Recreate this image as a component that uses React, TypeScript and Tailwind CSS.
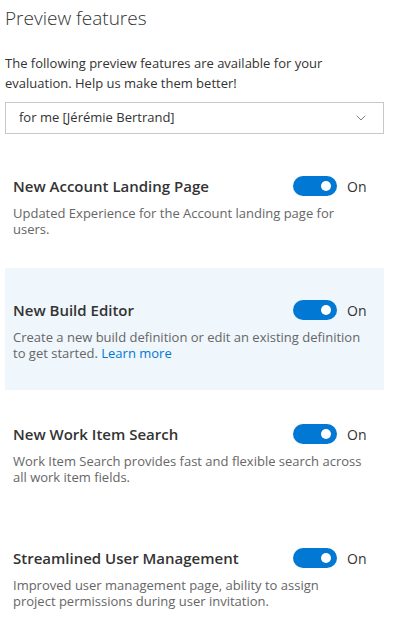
import { ChevronDown } from "lucide-react";

const features = [
  {
    title: "New Account Landing Page",
    desc: "Updated Experience for the Account landing page for users.",
    active: false,
  },
  {
    title: "New Build Editor",
    desc: "Create a new build definition or edit an existing definition to get started.",
    link: "Learn more",
    active: true,
  },
  {
    title: "New Work Item Search",
    desc: "Work Item Search provides fast and flexible search across all work item fields.",
    active: false,
  },
  {
    title: "Streamlined User Management",
    desc: "Improved user management page, ability to assign project permissions during user invitation.",
    active: false,
  },
];

function Toggle() {
  return (
    <div className="flex items-center">
      <div className="w-[44px] h-[20px] rounded-full bg-[#0078d4] flex items-center justify-end pr-[6px]">
        <div className="w-[10px] h-[10px] rounded-full bg-white" />
      </div>
      <span className="ml-[10px] text-[14px] text-[#333333]">On</span>
    </div>
  );
}

export default function App() {
  return (
    <div
      className="w-[402px] h-[634px] bg-white overflow-hidden pl-[5px] pr-[18px]"
      style={{ fontFamily: '"Open Sans", "Noto Sans", sans-serif' }}
    >
      <h1 className="pt-[4px] text-[19px] leading-[28px] font-light text-[#333333]">
        Preview features
      </h1>

      <p className="mt-[21px] text-[13px] leading-[20px] text-[#333333] pr-[40px]">
        The following preview features are available for your evaluation. Help us make them better!
      </p>

      <div className="mt-[9px] h-[32px] border border-[#c8c8c8] flex items-center justify-between pl-[13px] pr-[14px] text-[13px] text-[#333333]">
        <span>for me [Jérémie Bertrand]</span>
        <ChevronDown className="w-[16px] h-[16px] text-[#666666]" strokeWidth={1.25} />
      </div>

      <div className="mt-[10px] flex flex-col gap-[2px]">
        {features.map((f) => (
          <div
            key={f.title}
            className={`h-[122px] px-[8px] pt-[31px] ${f.active ? "bg-[#eff6fc]" : ""}`}
          >
            <div className="flex items-center h-[22px]">
              <span className="w-[280px] text-[15px] font-semibold text-[#333333]">{f.title}</span>
              <Toggle />
            </div>
            <p className="mt-[8px] text-[13px] leading-[16px] text-[#666666] pr-[13px]">
              {f.desc}
              {f.link && <span className="text-[#0078d4]"> {f.link}</span>}
            </p>
          </div>
        ))}
      </div>
    </div>
  );
}
